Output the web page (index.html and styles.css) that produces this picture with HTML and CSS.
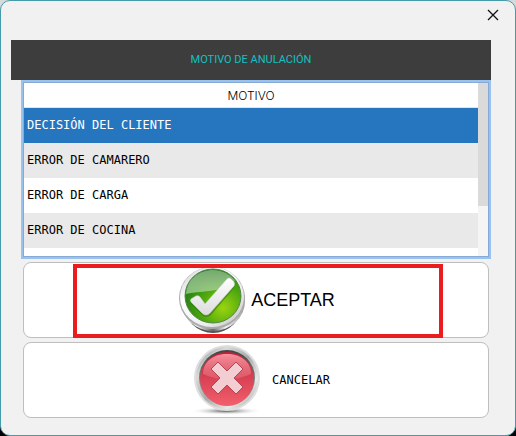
FILE: index.html
```html
<!DOCTYPE html>
<html lang="es">
<head>
    <meta charset="UTF-8">
    <meta name="viewport" content="width=device-width, initial-scale=1.0">
    <title>Motivo de anulación</title>
    <link rel="stylesheet" href="styles.css">
</head>
<body>

    <div class="dialog">

        <!-- Window bar -->
        <div class="window-bar">
            <button class="close-btn" type="button" aria-label="Cerrar">
                <svg width="12" height="12" viewBox="0 0 12 12">
                    <path d="M1 1L11 11M11 1L1 11" stroke="#111" stroke-width="1.3" fill="none"/>
                </svg>
            </button>
        </div>

        <h1 class="title">MOTIVO DE ANULACIÓN</h1>

        <!-- Reason list -->
        <div class="list">
            <div class="list-view">
                <table class="reasons">
                    <thead>
                        <tr><th>MOTIVO</th></tr>
                    </thead>
                    <tbody>
                        <tr class="selected"><td>DECISIÓN DEL CLIENTE</td></tr>
                        <tr><td>ERROR DE CAMARERO</td></tr>
                        <tr><td>ERROR DE CARGA</td></tr>
                        <tr><td>ERROR DE COCINA</td></tr>
                        <tr><td></td></tr>
                    </tbody>
                </table>
            </div>
            <div class="scrollbar"><div class="thumb"></div></div>
        </div>

        <!-- Buttons -->
        <div class="actions">
            <button class="action accept" type="button">
                <svg width="68" height="68" viewBox="0 0 68 68">
                    <defs>
                        <linearGradient id="rim" x1="0" y1="0" x2="1" y2="1">
                            <stop offset="0" stop-color="#c4c4c4"/>
                            <stop offset=".3" stop-color="#ffffff"/>
                            <stop offset=".7" stop-color="#ececec"/>
                            <stop offset="1" stop-color="#b9b9b9"/>
                        </linearGradient>
                        <linearGradient id="base" x1="0" y1="0" x2="1" y2="0">
                            <stop offset="0" stop-color="#a0a0a0"/>
                            <stop offset=".25" stop-color="#f2f2f2"/>
                            <stop offset=".5" stop-color="#666"/>
                            <stop offset=".7" stop-color="#f4f4f4"/>
                            <stop offset="1" stop-color="#999"/>
                        </linearGradient>
                        <radialGradient id="green" cx=".68" cy=".72" r=".75">
                            <stop offset="0" stop-color="#9ad411"/>
                            <stop offset=".5" stop-color="#51a90e"/>
                            <stop offset="1" stop-color="#1f7d12"/>
                        </radialGradient>
                        <linearGradient id="greenShine" x1="0" y1="0" x2="0" y2="1">
                            <stop offset="0" stop-color="#74a86c"/>
                            <stop offset="1" stop-color="#c5e3bc" stop-opacity=".6"/>
                        </linearGradient>
                        <linearGradient id="tick" x1="0" y1="0" x2="0" y2="1">
                            <stop offset="0" stop-color="#ffffff"/>
                            <stop offset="1" stop-color="#dcdcdf"/>
                        </linearGradient>
                    </defs>
                    <ellipse cx="34" cy="38" rx="29" ry="29" fill="#555"/>
                    <ellipse cx="34" cy="35" rx="32" ry="30" fill="url(#base)"/>
                    <ellipse cx="33" cy="32" rx="33" ry="31" fill="#aaa"/>
                    <ellipse cx="33" cy="31" rx="32" ry="30" fill="url(#rim)"/>
                    <ellipse cx="34" cy="30" rx="28" ry="27" fill="url(#green)" stroke="#54844c"/>
                    <path d="M7 28C8 13 20 4 34 4C44 4 52 9 56 15C43 27 26 24 7 28Z" fill="url(#greenShine)"/>
                    <path d="M12 35L17 32Q19 31 21 33L26 40L48 15Q50 13 52 15L55 18Q56 20 55 22L32 49Q27 53 23 49L12 38Q11 36 12 35Z" fill="#2e7611" opacity=".6"/>
                    <path d="M12 33L17 30Q19 29 21 31L26 38L48 13Q50 11 52 13L55 16Q56 18 55 20L31 47Q27 51 23 47L12 36Q11 34 12 33Z" fill="url(#tick)" stroke="#d3d3d3" stroke-width=".6"/>
                </svg>
                <span>ACEPTAR</span>
                <span class="highlight"></span>
            </button>

            <button class="action cancel" type="button">
                <svg width="78" height="72" viewBox="0 0 78 72">
                    <defs>
                        <linearGradient id="silver" x1="0" y1="0" x2="1" y2="1">
                            <stop offset="0" stop-color="#8b8f8e"/>
                            <stop offset=".25" stop-color="#d9d9d9"/>
                            <stop offset=".5" stop-color="#a9abaa"/>
                            <stop offset=".75" stop-color="#e9e9e9"/>
                            <stop offset="1" stop-color="#949494"/>
                        </linearGradient>
                        <linearGradient id="dark" x1="0" y1="0" x2="0" y2="1">
                            <stop offset="0" stop-color="#3f4544"/>
                            <stop offset="1" stop-color="#b5b5b5"/>
                        </linearGradient>
                        <linearGradient id="red" x1="0" y1="0" x2="0" y2="1">
                            <stop offset="0" stop-color="#c41f35"/>
                            <stop offset=".5" stop-color="#d94355"/>
                            <stop offset="1" stop-color="#f35f6c"/>
                        </linearGradient>
                        <linearGradient id="redShine" x1="0" y1="0" x2="0" y2="1">
                            <stop offset="0" stop-color="#f7929d"/>
                            <stop offset="1" stop-color="#e4707e" stop-opacity=".5"/>
                        </linearGradient>
                        <radialGradient id="ground">
                            <stop offset="0" stop-color="#555"/>
                            <stop offset="1" stop-color="#fff" stop-opacity="0"/>
                        </radialGradient>
                    </defs>
                    <ellipse cx="42" cy="67" rx="36" ry="4" fill="url(#ground)"/>
                    <circle cx="43" cy="34" r="33" fill="#dedede"/>
                    <circle cx="43" cy="34" r="31" fill="url(#silver)"/>
                    <circle cx="43" cy="34" r="28" fill="url(#dark)"/>
                    <circle cx="43" cy="35" r="27" fill="url(#red)"/>
                    <path d="M19 30C19 17 30 10 43 10S67 17 67 30C52 37 34 37 19 30Z" fill="url(#redShine)"/>
                    <path d="M34 18L43 27L52 18L59 25L50 34L59 43L52 50L43 41L34 50L27 43L36 34L27 25Z" fill="#f2cdd1" stroke="#b94354" stroke-width="1" stroke-linejoin="round"/>
                </svg>
                <span>CANCELAR</span>
            </button>
        </div>
    </div>

</body>
</html>
```
FILE: styles.css
```css
/* Global Styles */
* {
    box-sizing: border-box;
}

body {
    margin: 0;
    background: linear-gradient(#d5dada 50%, #000 50%);
    font-family: "Liberation Sans", Arial, sans-serif;
    overflow: hidden;
}

/* Dialog */
.dialog {
    height: 100vh;
    display: flex;
    flex-direction: column;
    padding: 0 24px 17px 10px;
    background: #f1f1f1;
    border: 1px solid #469bab;
    border-radius: 10px;
}

.window-bar {
    display: flex;
    flex: none;
    justify-content: flex-end;
    height: 39px;
}

.close-btn {
    width: 30px;
    height: 28px;
    margin-right: -17px;
    padding: 0;
    display: flex;
    justify-content: center;
    align-items: center;
    background: none;
    border: none;
    cursor: pointer;
}

.title {
    flex: none;
    margin: 0;
    background: #3d3d3d;
    color: #12c1c1;
    font-family: Roboto, sans-serif;
    font-size: 11px;
    font-weight: normal;
    line-height: 40px;
    text-align: center;
}

/* Reason list */
.list {
    flex: 1;
    min-height: 0;
    display: flex;
    margin-left: 10px;
    background: #fff;
    border: 2px solid #99c3ee;
    outline: 1px solid #86aad4;
    outline-offset: -3px;
    padding: 1px;
}

.list-view {
    flex: 1;
    overflow: hidden;
}

.reasons {
    width: 100%;
    border-collapse: separate;
    border-spacing: 0;
}

.reasons th {
    height: 25px;
    padding: 0;
    border-bottom: 1px solid #e3e3e3;
    font-family: Inter, sans-serif;
    font-size: 12px;
    font-weight: 300;
}

.reasons td {
    height: 35px;
    padding: 0 3px 2px;
    font-family: "DejaVu Sans Mono", monospace;
    font-size: 12px;
}

.reasons tbody tr:nth-child(even) {
    background: #e9e9e9;
}

.reasons .selected {
    background: #2675bf;
    color: #fff;
}

.scrollbar {
    width: 10px;
    background: #f5f5f5;
}

.thumb {
    height: 71%;
    background: #dadada;
}

/* Buttons */
.actions {
    flex: none;
    display: flex;
    flex-direction: column;
    gap: 4px;
    padding: 3px 2px 0 12px;
}

.action {
    position: relative;
    display: flex;
    justify-content: center;
    align-items: center;
    height: 76px;
    padding: 0 0 0 2px;
    background: #fff;
    border: 1px solid #bebebe;
    border-radius: 8px;
    color: #000;
    cursor: pointer;
}

.accept {
    gap: 4px;
    font-family: "Liberation Sans", Arial, sans-serif;
    font-size: 18px;
}

.cancel {
    gap: 10px;
    font-family: "DejaVu Sans Mono", monospace;
    font-size: 12px;
}

/* Red frame around the accept option */
.highlight {
    position: absolute;
    top: 1px;
    right: 45px;
    bottom: -1px;
    left: 49px;
    border: 4px solid #ea1c1f;
}
```
